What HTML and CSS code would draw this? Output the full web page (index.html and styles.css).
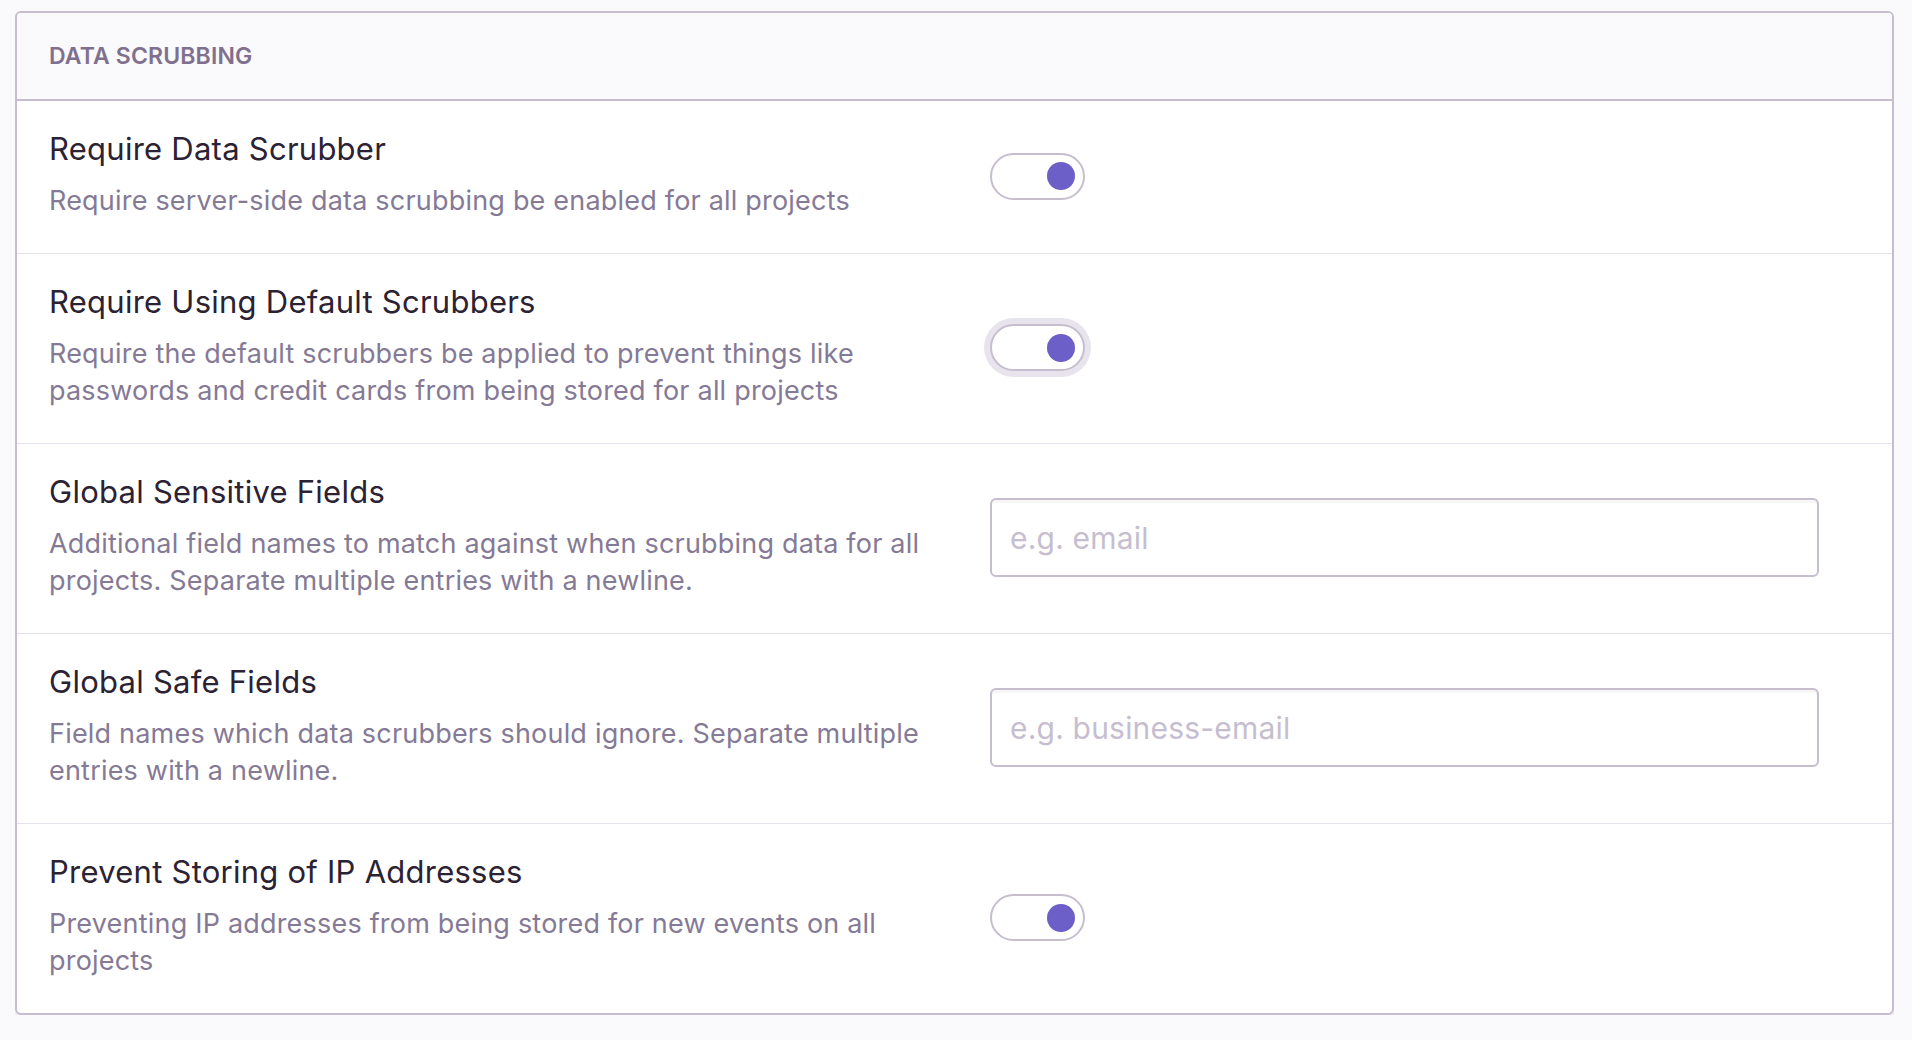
FILE: index.html
```html
<!DOCTYPE html>
<html lang="en">
<head>
<meta charset="utf-8">
<title>Data Scrubbing</title>
<link rel="stylesheet" href="styles.css">
</head>
<body>
<div class="page">
  <section class="panel">
    <header class="panel-header">Data Scrubbing</header>
    <div class="field">
      <div class="label">
        <div class="title">Require Data Scrubber</div>
        <div class="desc">Require server-side data scrubbing be enabled for all projects</div>
      </div>
      <div class="control"><span class="switch"><span class="knob"></span></span></div>
    </div>
    <div class="field">
      <div class="label">
        <div class="title">Require Using Default Scrubbers</div>
        <div class="desc">Require the default scrubbers be applied to prevent things like passwords and credit cards from being stored for all projects</div>
      </div>
      <div class="control"><span class="switch focused"><span class="knob"></span></span></div>
    </div>
    <div class="field">
      <div class="label">
        <div class="title">Global Sensitive Fields</div>
        <div class="desc">Additional field names to match against when scrubbing data for all projects. Separate multiple entries with a newline.</div>
      </div>
      <div class="control"><textarea class="input" rows="1" placeholder="e.g. email"></textarea></div>
    </div>
    <div class="field">
      <div class="label">
        <div class="title">Global Safe Fields</div>
        <div class="desc">Field names which data scrubbers should ignore. Separate multiple entries with a newline.</div>
      </div>
      <div class="control"><textarea class="input" rows="1" placeholder="e.g. business-email"></textarea></div>
    </div>
    <div class="field">
      <div class="label">
        <div class="title">Prevent Storing of IP Addresses</div>
        <div class="desc">Preventing IP addresses from being stored for new events on all projects</div>
      </div>
      <div class="control"><span class="switch"><span class="knob"></span></span></div>
    </div>
  </section>
</div>
</body>
</html>
```
FILE: styles.css
```css
html, body {
  margin: 0;
  padding: 0;
  background: #faf9fb;
}
body {
  font-family: Inter, "Noto Sans", sans-serif;
  color: #2b2233;
}
.page {
  padding: 11px 18px 0 15px;
}
.panel {
  background: #fff;
  border: 2px solid #c6becf;
  border-radius: 6px;
  box-shadow: 0 4px 0 rgba(68, 40, 100, 0.06);
  overflow: hidden;
}
.panel-header {
  height: 86px;
  display: flex;
  align-items: center;
  padding: 0 32px;
  background: #faf9fb;
  border-bottom: 2px solid #c6becf;
  color: #80708f;
  font-size: 23px;
  font-weight: 600;
  letter-spacing: 0.15px;
  text-transform: uppercase;
}
.field {
  display: grid;
  grid-template-columns: 1fr 829px;
  column-gap: 40px;
  padding: 30px 73px 34px 32px;
  border-bottom: 1px solid #e7e1ec;
}
.field:last-child {
  border-bottom: none;
}
.title {
  font-size: 31px;
  line-height: 36px;
  letter-spacing: 0.25px;
  color: #2b2233;
}
.desc {
  margin-top: 15px;
  font-size: 27px;
  line-height: 37px;
  letter-spacing: 0.2px;
  color: #857a96;
}
.control {
  display: flex;
  align-items: center;
  padding-top: 2px;
}
.switch {
  box-sizing: border-box;
  width: 95px;
  height: 47px;
  border: 2px solid #c6becf;
  border-radius: 24px;
  background: #fff;
  display: flex;
  align-items: center;
  justify-content: flex-end;
  padding-right: 8px;
}
.switch.focused {
  box-shadow: 0 0 0 6px #e8e4ed;
}
.knob {
  width: 28px;
  height: 28px;
  border-radius: 50%;
  background: #6c5fc7;
}
.input {
  box-sizing: border-box;
  width: 829px;
  height: 79px;
  border: 2px solid #c6becf;
  border-radius: 6px;
  box-shadow: inset 0 3px 0 rgba(43, 34, 51, 0.04);
  padding: 20px 18px;
  font-family: Inter, "Noto Sans", sans-serif;
  font-size: 30px;
  line-height: 36px;
  letter-spacing: 0.2px;
  color: #2b2233;
  resize: none;
  overflow: hidden;
  outline: none;
  background: #fff;
}
.input::placeholder {
  color: #c6becf;
}
```
